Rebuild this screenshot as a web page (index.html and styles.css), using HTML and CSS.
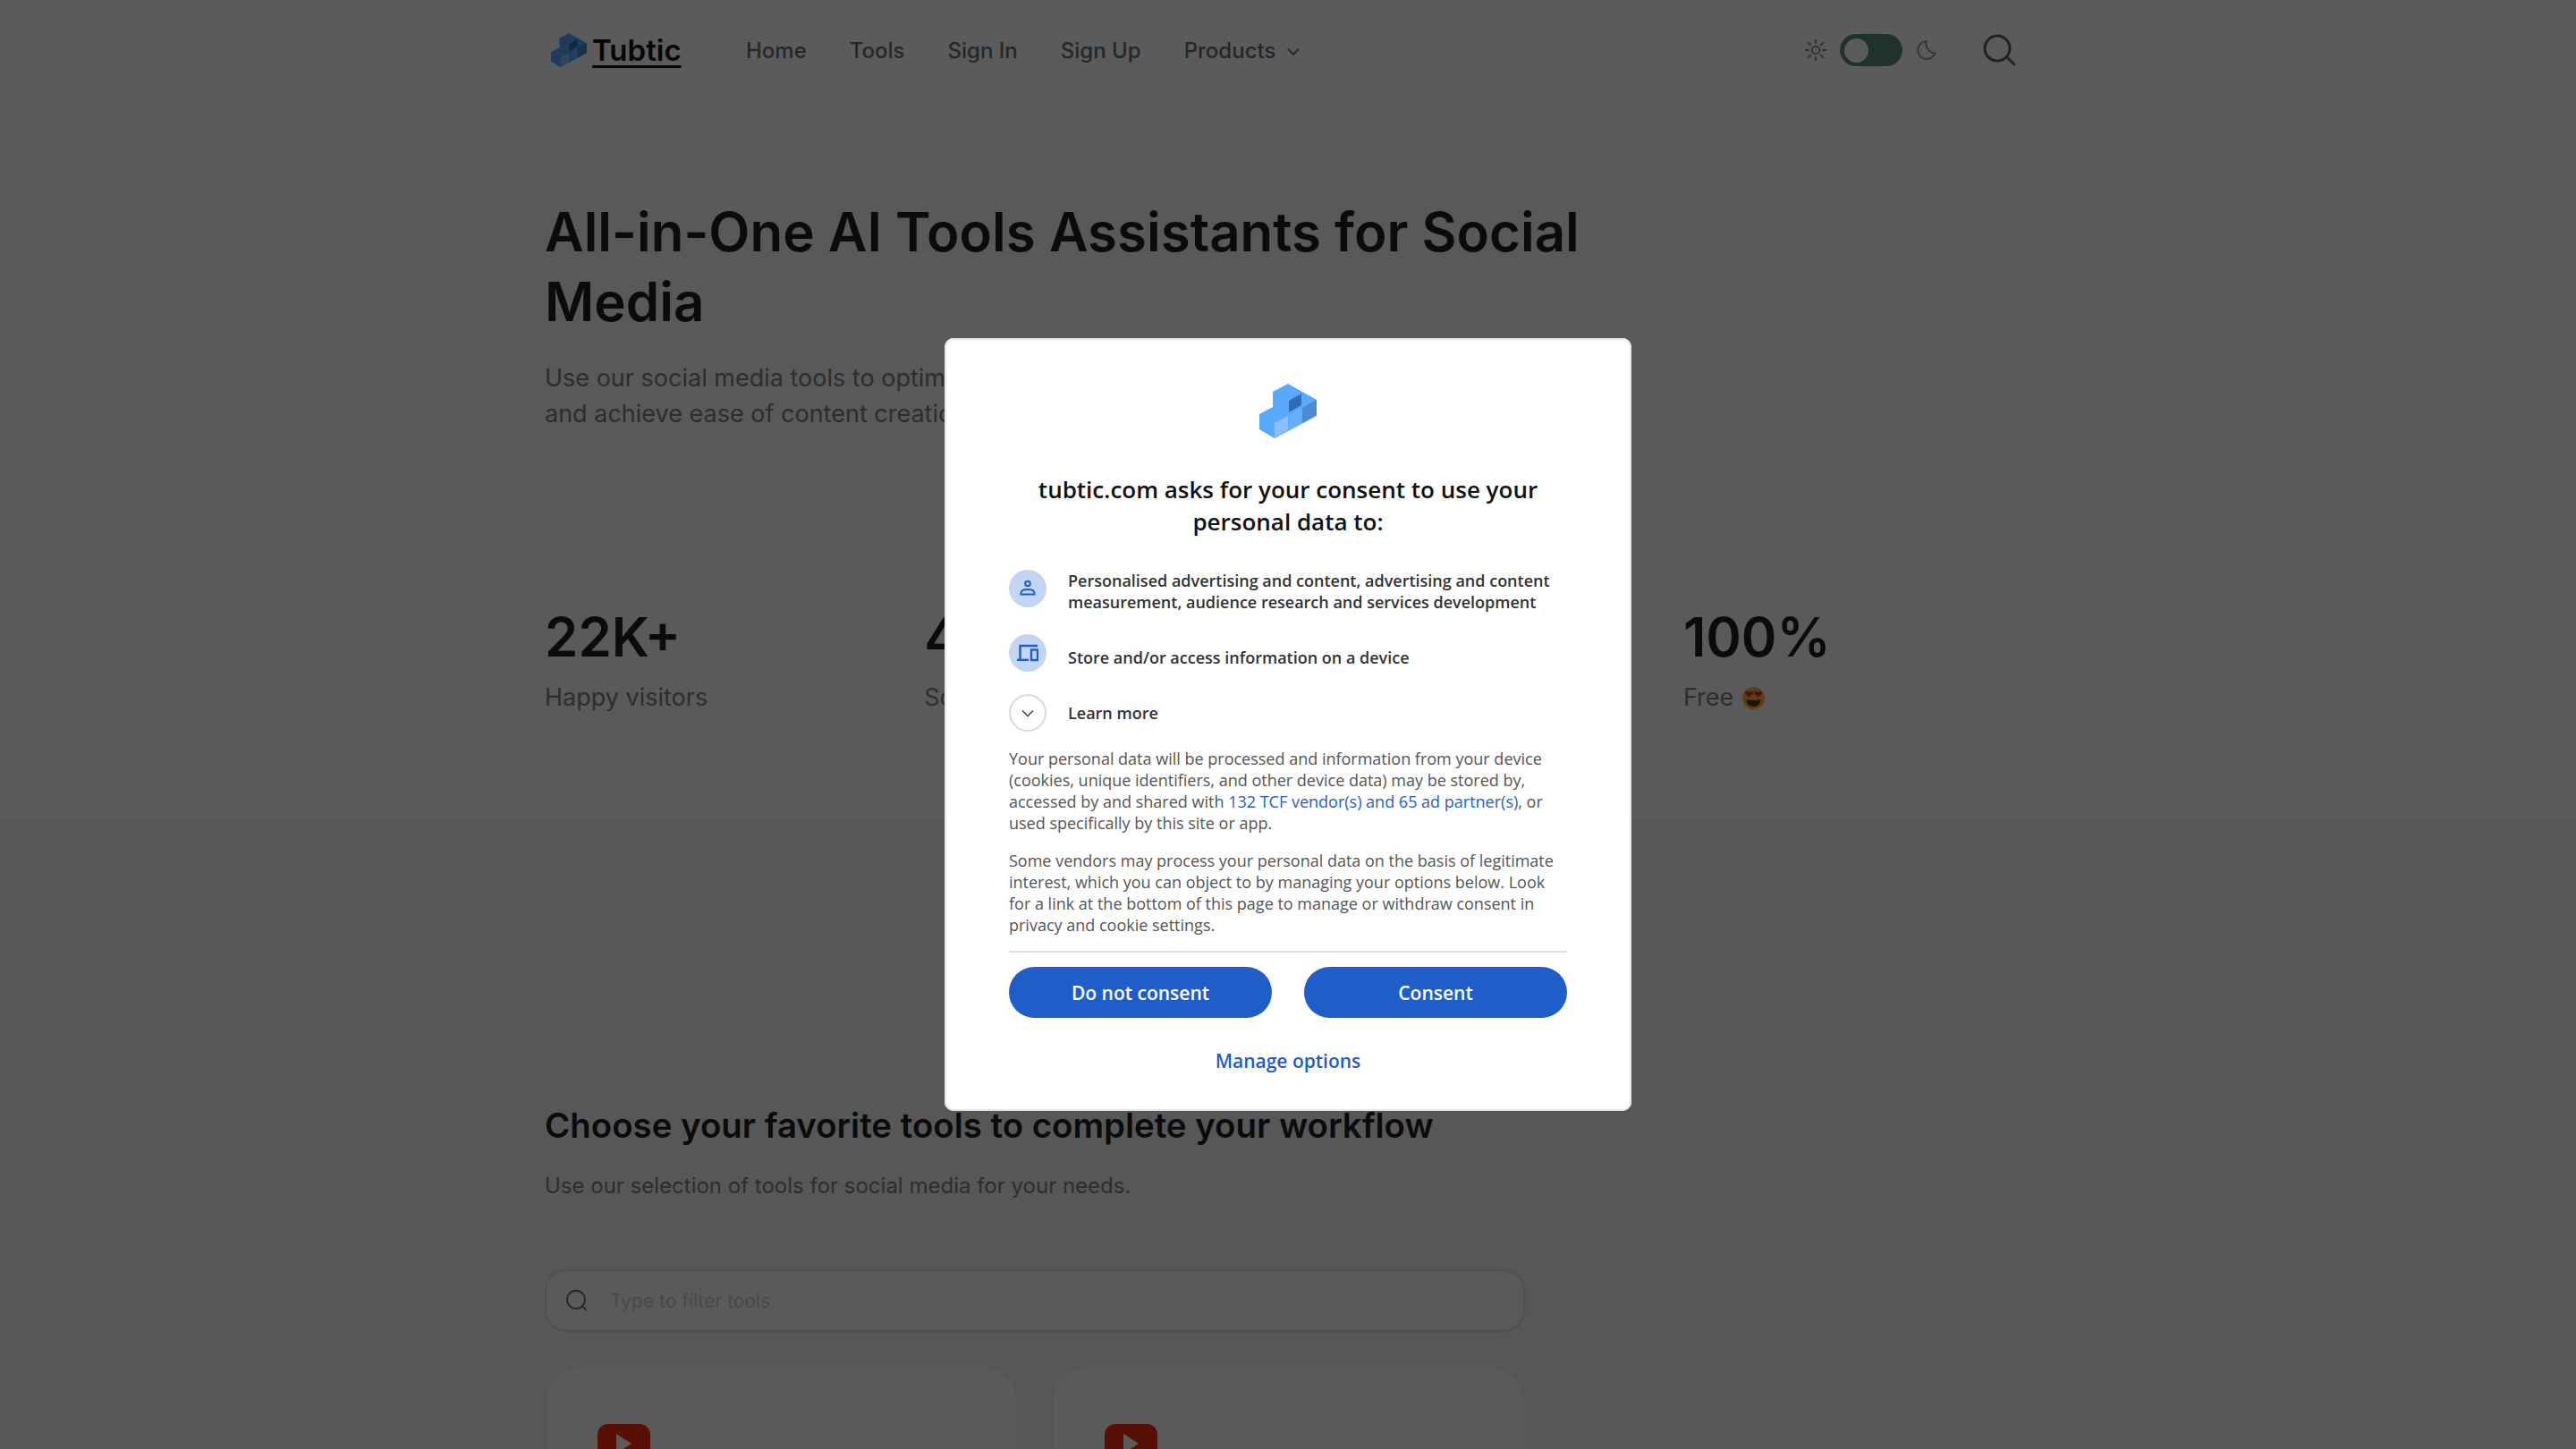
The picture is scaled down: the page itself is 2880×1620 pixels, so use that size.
FILE: index.html
```html
<!DOCTYPE html>
<html lang="en">
<head>
    <meta charset="utf-8" />
    <title>Tubtic</title>
    <link rel="stylesheet" href="styles.css">
</head>
<body>
    <svg class="defs" width="0" height="0">
        <symbol id="logo" viewBox="0 0 64 61">
            <polygon fill="#59a9ff" points="32,0 64,18 64,36 17,61 0,51 0,34 15,26 15,9" />
            <polygon fill="#2e6db3" points="33,19 47,11 47,24 33,32" />
            <polygon fill="#4a8ad0" points="48,27 64,18 64,35 48,44" />
            <polygon fill="#8bc0ff" points="17,44 32,36 32,52 17,60" />
            <polygon fill="#66afff" points="33,35 47,27 47,44 33,52" />
        </symbol>
    </svg>

    <header class="nav">
        <div class="container nav-inner">
            <a class="brand">
                <svg class="brand-logo"><use href="#logo" /></svg>
                <span class="brand-name">Tubtic</span>
            </a>
            <nav class="nav-links">
                <a>Home</a>
                <a>Tools</a>
                <a>Sign In</a>
                <a>Sign Up</a>
                <a class="nav-products">Products
                    <svg class="chevron" viewBox="0 0 14 9"><path d="M1.500 1.500 7 7l5.500-5.500" /></svg>
                </a>
            </nav>
            <div class="nav-right">
                <svg class="sun" viewBox="0 0 24 24">
                    <circle cx="12" cy="12" r="4.200" />
                    <path d="M12 0.500v3.600M12 19.900v3.600M0.500 12h3.600M19.900 12h3.600M3.900 3.900l2.500 2.500M17.600 17.600l2.500 2.500M3.900 20.100l2.500-2.500M17.600 6.400l2.500-2.500" />
                </svg>
                <div class="toggle"><span class="knob"></span></div>
                <svg class="moon" viewBox="0 0 24 24"><path d="M12.500 2A10 10 0 1 0 22.500 15.500 11 11 0 0 1 12.500 2Z" /></svg>
                <svg class="search-big" viewBox="0 0 36 36">
                    <circle cx="16" cy="16" r="14" />
                    <path d="M27 26l8 8" />
                </svg>
            </div>
        </div>
    </header>

    <section class="hero">
        <div class="container">
            <h1>All-in-One AI Tools Assistants for Social<br>Media</h1>
            <p class="lead">Use our social media tools to optimize your workflow, grow your audience<br>and achieve ease of content creation.</p>
        </div>
    </section>

    <section class="stats">
        <div class="container stats-row">
            <div class="stat"><div class="stat-num">22K+</div><div class="stat-label">Happy visitors</div></div>
            <div class="stat"><div class="stat-num">40+</div><div class="stat-label">Social tools</div></div>
            <div class="stat"><div class="stat-num">24/7</div><div class="stat-label">Online</div></div>
            <div class="stat">
                <div class="stat-num">100%</div>
                <div class="stat-label">Free
                    <svg class="emoji" viewBox="0 0 25 25">
                        <circle cx="12.500" cy="12.500" r="12.500" fill="#f5b53a" />
                        <path fill="#e8232f" d="M7.500 11.500 3.600 8c-1.600-2 1-4.400 3-2.600l.9.800.9-.800c2-1.800 4.600.6 3 2.600Z" />
                        <path fill="#e8232f" d="M17.500 11.500 13.600 8c-1.600-2 1-4.400 3-2.600l.9.800.9-.800c2-1.800 4.600.6 3 2.600Z" />
                        <path fill="#5a3210" d="M4.500 14c2.500 1 13.500 1 16 0 0 5-3.500 8-8 8s-8-3-8-8Z" />
                    </svg>
                </div>
            </div>
        </div>
    </section>

    <section class="tools">
        <div class="container">
            <h2>Choose your favorite tools to complete your workflow</h2>
            <p class="tools-sub">Use our selection of tools for social media for your needs.</p>
            <div class="filter">
                <svg class="filter-icon" viewBox="0 0 24 24">
                    <circle cx="11" cy="11" r="10" />
                    <path d="M18 18l5 5" />
                </svg>
                <span class="filter-text">Type to filter tools</span>
            </div>
            <div class="cards">
                <div class="card">
                    <div class="yt"><span class="yt-play"></span></div>
                </div>
                <div class="card">
                    <div class="yt"><span class="yt-play"></span></div>
                </div>
            </div>
        </div>
    </section>

    <div class="overlay">
        <div class="dialog">
            <svg class="dialog-logo"><use href="#logo" /></svg>
            <h3 class="dialog-title">tubtic.com asks for your consent to use your personal data to:</h3>

            <div class="purpose purpose-first">
                <span class="purpose-icon">
                    <svg viewBox="0 0 20 20">
                        <circle cx="10" cy="4.500" r="2.800" />
                        <path d="M2.500 16.500h15v-1.200c0-2.800-3.300-4.300-7.500-4.300s-7.500 1.500-7.500 4.300Z" />
                    </svg>
                </span>
                <span class="purpose-text">Personalised advertising and content, advertising and content measurement, audience research and services development</span>
            </div>
            <div class="purpose purpose-second">
                <span class="purpose-icon">
                    <svg class="device" viewBox="0 0 24 20">
                        <path d="M3.500 17V2H23" />
                        <path d="M0 17.800h13" />
                        <rect x="16" y="6.500" width="7" height="11.500" />
                    </svg>
                </span>
                <span class="purpose-text">Store and/or access information on a device</span>
            </div>
            <div class="purpose purpose-third">
                <span class="purpose-icon purpose-more">
                    <svg viewBox="0 0 14 9"><path d="M1 1.500 7 7.500l6-6" /></svg>
                </span>
                <span class="purpose-text">Learn more</span>
            </div>

            <p class="dialog-copy">Your personal data will be processed and information from your device (cookies, unique identifiers, and other device data) may be stored by, accessed by and shared with <a class="dialog-link">132 TCF vendor(s) and 65 ad partner(s)</a>, or used specifically by this site or app.</p>
            <p class="dialog-copy dialog-copy-last">Some vendors may process your personal data on the basis of legitimate interest, which you can object to by managing your options below. Look for a link at the bottom of this page to manage or withdraw consent in privacy and cookie settings.</p>

            <div class="dialog-actions">
                <button class="btn">Do not consent</button>
                <button class="btn">Consent</button>
            </div>
            <a class="manage">Manage options</a>
        </div>
    </div>
</body>
</html>
```

FILE: styles.css
```css
* {
    box-sizing: border-box;
}

html,
body {
    margin: 0;
    height: 100%;
    overflow: hidden;
}

body {
    font-family: Inter, "Liberation Sans", sans-serif;
    background: #fff;
    color: #1c1f26;
}

.defs {
    position: absolute;
}

.container {
    width: 1662px;
    margin: 0 auto;
}

/* nav */
.nav {
    height: 112px;
    background: #fff;
}

.nav-inner {
    height: 100%;
    display: flex;
    align-items: center;
}

.brand {
    display: flex;
    align-items: center;
    width: 225px;
    padding-left: 7px;
}

.brand-logo {
    width: 40px;
    height: 38px;
    margin-right: 6px;
}

.brand-name {
    font-size: 33px;
    font-weight: 600;
    text-decoration: underline;
    text-underline-offset: 5px;
    text-decoration-thickness: 3px;
    color: #111;
}

.nav-links {
    display: flex;
    gap: 48px;
    font-size: 24px;
    font-weight: 500;
    color: #666a75;
}

.nav-products {
    display: flex;
    align-items: center;
    gap: 12px;
}

.chevron {
    width: 16px;
    height: 10px;
    margin-top: 3px;
}

.chevron path {
    fill: none;
    stroke: #666a75;
    stroke-width: 1.800;
}

.nav-right {
    margin-left: auto;
    display: flex;
    align-items: center;
    padding-right: 18px;
}

.sun {
    width: 24px;
    height: 24px;
    margin-right: 15px;
    fill: none;
    stroke: #6a8a7e;
    stroke-width: 1.800;
    stroke-linecap: round;
}

.toggle {
    width: 70px;
    height: 36px;
    border-radius: 18px;
    background: #57907a;
    padding: 5px;
}

.knob {
    display: block;
    width: 27px;
    height: 27px;
    border-radius: 50%;
    background: #fff;
}

.moon {
    width: 24px;
    height: 24px;
    margin-left: 14px;
    margin-right: 52px;
    fill: none;
    stroke: #7b7f8a;
    stroke-width: 1.600;
}

.search-big {
    width: 36px;
    height: 36px;
    fill: none;
    stroke: #5a5f6b;
    stroke-width: 3;
    stroke-linecap: round;
}

/* hero */
.hero {
    background: #f8f8f8;
    padding: 108px 0 69px;
}

h1 {
    margin: 0 0 27px;
    font-size: 60px;
    line-height: 78px;
    font-weight: 600;
}

.lead {
    margin: 0;
    font-size: 27px;
    line-height: 40px;
    color: #7b7e88;
}

/* stats */
.stats {
    background: #fcfcfc;
    padding: 124px 0 118px;
}

.stats-row {
    display: grid;
    grid-template-columns: repeat(4, 424.300px);
}

.stat-num {
    font-size: 60px;
    line-height: 72px;
    font-weight: 600;
}

.stat-label {
    margin-top: 12px;
    display: flex;
    align-items: center;
    gap: 10px;
    font-size: 27px;
    line-height: 40px;
    color: #7b7e88;
}

.emoji {
    width: 25px;
    height: 25px;
}

/* tools */
.tools {
    background: #f4f4f4;
    padding-top: 316px;
}

h2 {
    margin: 0;
    font-size: 38.400px;
    line-height: 48px;
    font-weight: 600;
}

.tools-sub {
    margin: 24px 0 0;
    font-size: 24px;
    line-height: 40px;
    color: #7b7e88;
}

.filter {
    margin-top: 73px;
    width: 1096px;
    height: 70px;
    display: flex;
    align-items: center;
    padding-left: 22px;
    background: #fcfcfc;
    border: 2px solid #e0e0e3;
    border-radius: 24px;
}

.filter-icon {
    width: 24px;
    height: 24px;
    margin-right: 25px;
    fill: none;
    stroke: #6b6f78;
    stroke-width: 1.800;
}

.filter-text {
    font-size: 21px;
    color: #c9ccd4;
}

.cards {
    margin-top: 38px;
    width: 1096px;
    display: grid;
    grid-template-columns: 1fr 1fr;
    gap: 38px;
}

.card {
    height: 400px;
    padding: 63px 57px;
    background: #fdfdfd;
    border: 2px solid #f0f0f2;
    border-radius: 40px;
}

.yt {
    width: 59px;
    height: 44px;
    border-radius: 12px;
    background: #f52a10;
    display: flex;
    align-items: center;
    justify-content: center;
}

.yt-play {
    width: 0;
    height: 0;
    border-left: 17px solid #fff;
    border-top: 11px solid transparent;
    border-bottom: 11px solid transparent;
}

/* consent dialog */
.overlay {
    position: fixed;
    inset: 0;
    background: rgba(0, 0, 0, 0.643);
    display: flex;
    align-items: center;
    justify-content: center;
}

.dialog {
    width: 768px;
    height: 864px;
    padding: 51px 72px 0;
    background: #fff;
    border-radius: 10px;
    box-shadow: inset 0 0 0 2px #e6e6e6;
    font-family: "Open Sans", "Noto Sans", sans-serif;
    display: flex;
    flex-direction: column;
}

.dialog-logo {
    width: 64px;
    height: 61px;
    align-self: center;
    flex-shrink: 0;
}

.dialog-title {
    margin: 39px 0 0;
    text-align: center;
    font-size: 26px;
    line-height: 36px;
    font-weight: 600;
    color: #111;
}

.purpose {
    display: flex;
    align-items: center;
    gap: 24px;
}

.purpose-first {
    margin-top: 36px;
    align-items: flex-start;
}

.purpose-second {
    margin-top: 24px;
}

.purpose-second .purpose-text {
    margin-top: 10px;
}

.purpose-third {
    margin-top: 25px;
}

.purpose-icon {
    width: 42px;
    height: 42px;
    flex-shrink: 0;
    border-radius: 50%;
    background: #c3d5f3;
    display: flex;
    align-items: center;
    justify-content: center;
}

.purpose-icon svg {
    width: 20px;
    height: 20px;
    fill: none;
    stroke: #1f5ec8;
    stroke-width: 2;
}

.purpose-icon .device {
    width: 24px;
    height: 20px;
    stroke-width: 2.400;
}

.purpose-more {
    background: #fff;
    border: 2px solid #d8d8de;
}

.purpose-more svg {
    width: 14px;
    height: 9px;
    stroke: #444;
    stroke-width: 1.500;
}

.purpose-text {
    font-size: 18px;
    line-height: 24px;
    font-weight: 600;
    color: #333;
}

.dialog-copy {
    margin: 18px 0 0;
    font-size: 18px;
    line-height: 24px;
    color: #555;
}

.dialog-copy-last {
    padding-bottom: 17px;
    border-bottom: 2px solid #dcdce6;
}

.dialog-link {
    color: #1f5ec8;
}

.dialog-actions {
    margin-top: 16px;
    display: grid;
    grid-template-columns: 1fr 1fr;
    gap: 36px;
}

.btn {
    height: 57px;
    border: 0;
    border-radius: 29px;
    background: #1f5ec8;
    color: #fff;
    font-family: inherit;
    font-size: 21px;
    font-weight: 600;
}

.manage {
    margin-top: 34px;
    text-align: center;
    font-size: 21px;
    line-height: 28px;
    font-weight: 600;
    color: #1f5ec8;
}
```
